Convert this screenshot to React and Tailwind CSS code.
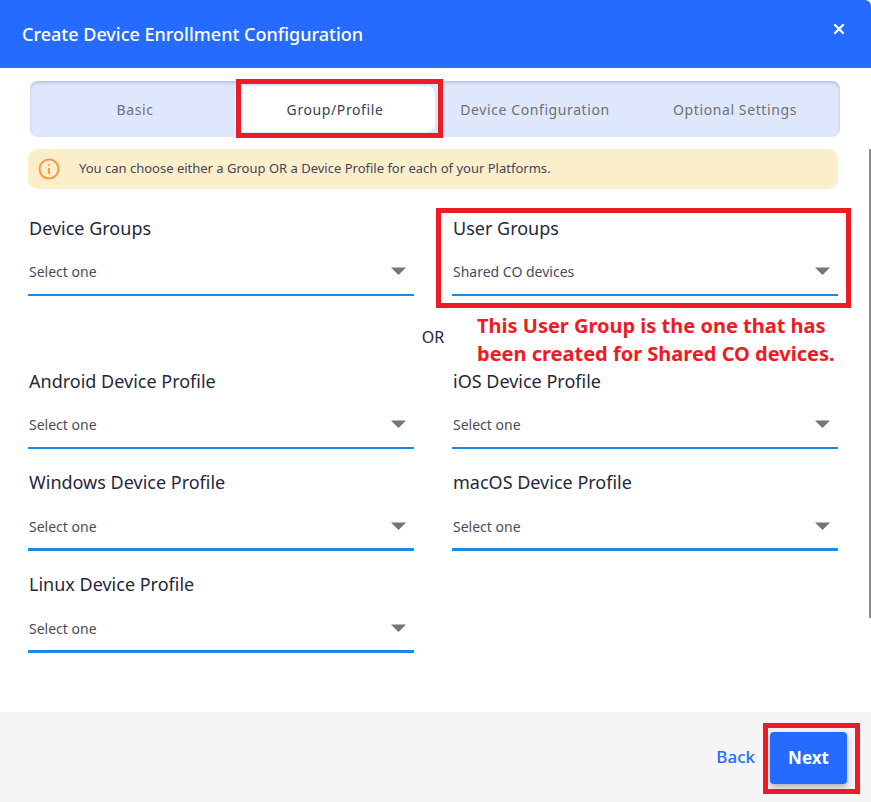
import React from 'react';
import { X } from 'lucide-react';

const tabs = ['Basic', 'Group/Profile', 'Device Configuration', 'Optional Settings'];

const Caret = () => (
  <svg width="16" height="9" viewBox="0 0 16 9" className="mr-[7px] mt-[11px] shrink-0">
    <path d="M0 0.5h15L7.5 8z" fill="#757575" />
  </svg>
);

const SelectField = ({ label, value = 'Select one', heavy }) => (
  <div className="w-[386px]">
    <div className="pl-px text-[18px] leading-[24px] text-[#25283d]">{label}</div>
    <div
      className={`flex h-[40px] items-start justify-between pl-px border-[#1e88e5] ${
        heavy ? 'mt-[17px] border-b-[3px]' : 'mt-[16px] border-b-2'
      }`}
    >
      <span className="text-[14px] leading-[32px] text-[#4a4c5c]">{value}</span>
      <Caret />
    </div>
  </div>
);

const App = () => {
  return (
    <div className="relative flex h-[802px] w-[871px] flex-col overflow-hidden bg-white font-['Noto_Sans_CJK_JP',sans-serif]">
      <div className="flex h-[68px] shrink-0 items-center justify-between rounded-tr-md bg-[#266bff] pl-[22px] pr-[24px] text-white">
        <h1 className="text-[18px] font-medium">Create Device Enrollment Configuration</h1>
        <X size={16} strokeWidth={3.5} className="mb-[10px]" />
      </div>

      <div className="relative flex-1 overflow-hidden px-[28px] pt-[13px]">
        <div className="ml-[2px] grid h-[56px] w-[810px] grid-cols-4 rounded-lg bg-[#dfe7fc] p-[5px] shadow-[inset_0_2px_3px_rgba(90,110,180,0.3)]">
          {tabs.map((tab, i) => (
            <div
              key={tab}
              className={`flex items-center justify-center rounded-lg text-[14px] tracking-[0.6px] ${
                i === 1 ? 'bg-white text-[#3d3f50]' : 'text-[#6f7078]'
              }`}
            >
              {tab}
            </div>
          ))}
        </div>

        <div className="mt-[12px] flex h-[40px] w-[810px] items-center rounded-[10px] bg-[#faeecb] pl-[10px] text-[13px] text-[#44465a]">
          <svg width="22" height="22" viewBox="0 0 22 22" fill="none" stroke="#f59a45" strokeWidth="2" className="mr-[19px]">
            <circle cx="11" cy="11" r="9.5" />
            <path d="M11 10v6M11 6.2v1.6" />
          </svg>
          You can choose either a Group OR a Device Profile for each of your Platforms.
        </div>

        <div className="mt-[27px] flex w-[810px] justify-between">
          <SelectField label="Device Groups" />
          <SelectField label="User Groups" value="Shared CO devices" />
        </div>

        <div className="mt-[29px] h-[25px] w-[810px] text-center text-[16px] leading-[25px] text-[#25283d]">OR</div>

        <div className="mt-[19px] grid w-[810px] grid-cols-[386px_386px] justify-between gap-y-[21px]">
          <SelectField label="Android Device Profile" />
          <SelectField label="iOS Device Profile" />
          <SelectField label="Windows Device Profile" heavy />
          <SelectField label="macOS Device Profile" heavy />
          <SelectField label="Linux Device Profile" heavy />
        </div>

        <div className="mt-[54px] flex items-start pl-[20px]">
          <svg width="20" height="20" viewBox="0 0 20 20" fill="none" stroke="#266bff" strokeWidth="2">
            <path d="M-4 11l4 4 6-8" />
          </svg>
          <span className="ml-[29px] text-[16px] leading-[24px] text-[#25283d]">Auto Enroll Devices</span>
        </div>

        <div className="absolute right-0 top-[81px] h-[469px] w-[2px] bg-[#8b8b8b]" />
      </div>

      <div className="flex h-[90px] shrink-0 items-start justify-end bg-[#f5f5f5] pt-[20px] pr-[24px]">
        <button className="mt-[8px] mr-[15px] h-[34px] text-[17px] font-medium text-[#266bff]">Back</button>
        <button className="h-[52px] w-[77px] rounded bg-[#266bff] text-[17px] font-bold text-white shadow-[0_3px_6px_rgba(0,0,0,0.3)]">
          Next
        </button>
      </div>

      {/* red annotations added on top of the screenshot */}
      <div className="absolute left-[236px] top-[79px] h-[59px] w-[207px] border-[5px] border-[#ed1c24]" />
      <div className="absolute left-[436px] top-[208px] h-[100px] w-[415px] border-[5px] border-[#ed1c24]" />
      <div className="absolute left-[763px] top-[723px] h-[71px] w-[97px] border-[5px] border-[#ed1c24]" />
      <div className="absolute left-[477px] top-[312px] text-[20px] font-bold leading-[28px] text-[#ed1c24]">
        This User Group is the one that has
        <br />
        been created for Shared CO devices.
      </div>
    </div>
  );
};

export default App;
